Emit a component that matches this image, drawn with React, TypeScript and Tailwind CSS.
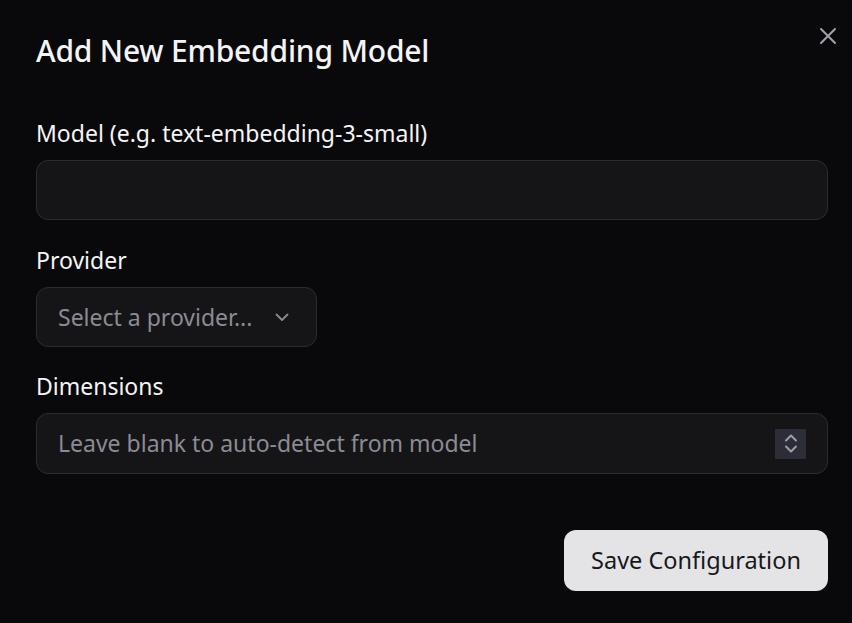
import React from "react";

export default function App() {
  return (
    <div
      className="relative w-[852px] h-[623px] bg-[#09090b] text-[#f4f4f5] overflow-hidden"
      style={{ fontFamily: '"Noto Sans", "Open Sans", sans-serif' }}
    >
      <button className="absolute right-[15px] top-[27px] w-[18px] h-[18px] flex items-center justify-center text-[#a1a1aa]">
        <svg width="18" height="18" viewBox="0 0 18 18" fill="none" stroke="currentColor" strokeWidth="2" strokeLinecap="round">
          <path d="M2 2L16 16M16 2L2 16" />
        </svg>
      </button>
      <div className="flex flex-col pl-[36px] pr-[24px] pt-[29px]">
        <h2 className="text-[30px] leading-[44px] font-medium tracking-[-0.2px]">Add New Embedding Model</h2>
        <div className="flex flex-col mt-[42px]">
          <div className="flex flex-col gap-[9px]">
            <label className="text-[23px] leading-[36px]">Model (e.g. text-embedding-3-small)</label>
            <input className="h-[60px] w-full rounded-[12px] border border-[#2c2c30] bg-[#151517] px-[21px] text-[23px] outline-none" />
          </div>
          <div className="flex flex-col gap-[9px] mt-[22px]">
            <label className="text-[23px] leading-[36px]">Provider</label>
            <div className="h-[60px] w-[281px] rounded-[12px] border border-[#2c2c30] bg-[#151517] pl-[21px] pr-[26px] flex items-center justify-between">
              <span className="text-[23px] text-[#8b8b94]">Select a provider...</span>
              <svg width="16" height="16" viewBox="0 0 16 16" fill="none" stroke="#8b8b94" strokeWidth="1.8" strokeLinecap="round" strokeLinejoin="round">
                <path d="M2.5 5.5L8 11L13.5 5.5" />
              </svg>
            </div>
          </div>
          <div className="flex flex-col gap-[9px] mt-[21px]">
            <label className="text-[23px] leading-[36px]">Dimensions</label>
            <div className="h-[61px] w-full rounded-[12px] border border-[#2c2c30] bg-[#151517] pl-[21px] pr-[21px] flex items-center justify-between">
              <span className="text-[23px] text-[#8b8b94]">Leave blank to auto-detect from model</span>
              <div className="w-[31px] h-[30px] bg-[#2d2d37] flex flex-col items-center justify-center gap-[3px]">
                <svg width="14" height="8" viewBox="0 0 14 8" fill="none" stroke="#9d9dab" strokeWidth="2" strokeLinecap="round" strokeLinejoin="round">
                  <path d="M2 6.5L7 1.5L12 6.5" />
                </svg>
                <svg width="14" height="8" viewBox="0 0 14 8" fill="none" stroke="#9d9dab" strokeWidth="2" strokeLinecap="round" strokeLinejoin="round">
                  <path d="M2 1.5L7 6.5L12 1.5" />
                </svg>
              </div>
            </div>
          </div>
        </div>
        <div className="flex justify-end mt-[56px]">
          <button className="h-[61px] w-[264px] rounded-[12px] bg-[#e4e4e7] text-[#18181b] text-[23.5px]">
            Save Configuration
          </button>
        </div>
      </div>
    </div>
  );
}
